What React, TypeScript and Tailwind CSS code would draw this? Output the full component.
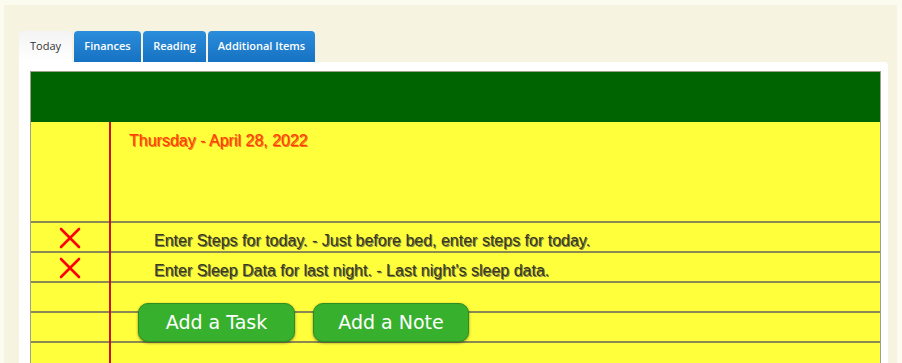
const TABS = [
  { label: 'Finances', w: 'w-[67px]' },
  { label: 'Reading', w: 'w-[63px]' },
  { label: 'Additional Items', w: 'w-[107px]' },
]

const TASKS = [
  'Enter Steps for today. - Just before bed, enter steps for today.',
  "Enter Sleep Data for last night. - Last night's sleep data.",
]

const XMark = () => (
  <svg width="22" height="22" viewBox="0 0 22 22" fill="none" stroke="#ff0000" strokeWidth="2.6" strokeLinecap="round">
    <line x1="2" y1="2" x2="20" y2="20" />
    <line x1="20" y1="2" x2="2" y2="20" />
  </svg>
)

const App = () => {
  return (
    <div className="h-[363px] overflow-hidden bg-[#fcfbef] pl-[4px] pr-[5px] pt-[5px]">
      <div className="h-full bg-[#f6f3e0] pl-[15px] pr-[9px] pt-[26px]">
        {/* Tabs */}
        <div className="flex items-end gap-[2px] font-['Open_Sans',sans-serif] text-[11px]">
          <div className="flex h-[31px] w-[53px] items-center justify-center rounded-t-[4px] bg-gradient-to-b from-[#f4f4f4] to-white text-[#333]">
            Today
          </div>
          {TABS.map(({ label, w }) => (
            <div
              key={label}
              className={`flex h-[31px] ${w} items-center justify-center rounded-t-[4px] bg-gradient-to-b from-[#2b8ddb] to-[#1672c2] font-semibold text-white`}
            >
              {label}
            </div>
          ))}
        </div>

        {/* Panel */}
        <div className="h-full rounded-tr-[4px] bg-white pl-[11px] pr-[7px] pt-[9px]">
          <div className="border border-b-0 border-[#a0a08a]">
            <div className="h-[50px] bg-[#006400]" />
            <div className="flex h-[260px] [background:linear-gradient(#ffff3c,#ffff3c)_top/100%_99px_no-repeat,repeating-linear-gradient(#ffff3c_0_9px,#8b8a55_9px_11px,#ffff3c_11px_30px)]">
              {/* margin column */}
              <div className="w-[78px] shrink-0 pt-[101px]">
                {TASKS.map((t) => (
                  <div key={t} className="flex h-[30px] justify-center pt-[4px]">
                    <XMark />
                  </div>
                ))}
              </div>

              {/* content column */}
              <div className="flex-1 border-l-2 border-[#cc1111] font-['Liberation_Sans',Arial,sans-serif]">
                <div className="h-[101px] pl-[18px] pt-[10px] text-[16px] leading-[18px] text-[#ff3c00] [text-shadow:1px_1px_0_#f07818]">
                  Thursday - April 28, 2022
                </div>
                {TASKS.map((t) => (
                  <div
                    key={t}
                    className="h-[30px] pl-[43px] pt-[9px] text-[16px] leading-[18px] text-[#38381c] [text-shadow:1px_1px_0_#7c7c40]"
                  >
                    {t}
                  </div>
                ))}
                <div className="flex gap-[18px] pl-[27px] pt-[20px] font-['DejaVu_Sans',sans-serif]">
                  <button className="flex h-[39px] w-[157px] items-center justify-center rounded-[10px] border border-[#2a8e22] bg-[#37b12d] text-[19px] text-white shadow-[0_1px_3px_rgba(0,0,0,0.45)]">
                    Add a Task
                  </button>
                  <button className="flex h-[39px] w-[156px] items-center justify-center rounded-[10px] border border-[#2a8e22] bg-[#37b12d] text-[19px] text-white shadow-[0_1px_3px_rgba(0,0,0,0.45)]">
                    Add a Note
                  </button>
                </div>
              </div>
            </div>
          </div>
        </div>
      </div>
    </div>
  )
}

export default App
